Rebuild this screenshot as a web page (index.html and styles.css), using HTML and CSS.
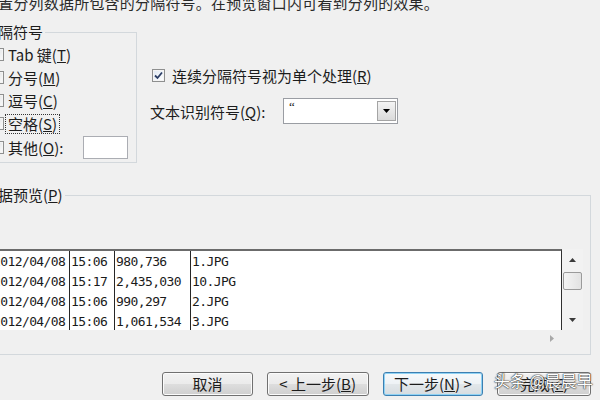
FILE: index.html
```html
<!DOCTYPE html>
<html lang="zh-CN">
<head>
<meta charset="utf-8">
<title>文本分列向导</title>
<link rel="stylesheet" href="styles.css">
</head>
<body>
<div class="dialog">
  <p class="intro">设置分列数据所包含的分隔符号。在预览窗口内可看到分列的效果。</p>
  <div class="top-row">
    <fieldset class="group delims">
      <legend>分隔符号</legend>
      <div class="opt"><span class="cb"></span><span>Tab 键(<u>T</u>)</span></div>
      <div class="opt"><span class="cb"></span><span>分号(<u>M</u>)</span></div>
      <div class="opt"><span class="cb"></span><span>逗号(<u>C</u>)</span></div>
      <div class="opt"><span class="cb"></span><span class="focus">空格(<u>S</u>)</span></div>
      <div class="opt other"><span class="cb"></span><span class="other-label">其他(<u>O</u>):</span><span class="field"></span></div>
    </fieldset>
    <div class="options">
      <div class="opt consec">
        <span class="cb checked"><svg width="11" height="11" viewBox="0 0 11 11"><path d="M2 5.5 L4.5 8 L9 2.5" fill="none" stroke="#2c3e66" stroke-width="1.8"/></svg></span>
        <span>连续分隔符号视为单个处理(<u>R</u>)</span>
      </div>
      <div class="qualifier">
        <span class="q-label">文本识别符号(<u>Q</u>):</span>
        <div class="combo">
          <span class="combo-value">“</span>
          <span class="combo-btn"><svg width="7" height="4" viewBox="0 0 7 4"><path d="M0 0 H7 L3.5 4 Z" fill="#000"/></svg></span>
        </div>
      </div>
    </div>
  </div>
  <fieldset class="group preview-group">
    <legend>数据预览(<u>P</u>)</legend>
    <div class="preview">
      <div class="grid">
        <div class="col c1">
          <div class="cell">2012/04/08</div>
          <div class="cell">2012/04/08</div>
          <div class="cell">2012/04/08</div>
          <div class="cell">2012/04/08</div>
        </div>
        <div class="col c2">
          <div class="cell">15:06</div>
          <div class="cell">15:17</div>
          <div class="cell">15:06</div>
          <div class="cell">15:06</div>
        </div>
        <div class="col c3">
          <div class="cell">980,736</div>
          <div class="cell">2,435,030</div>
          <div class="cell">990,297</div>
          <div class="cell">1,061,534</div>
        </div>
        <div class="col c4">
          <div class="cell">1.JPG</div>
          <div class="cell">10.JPG</div>
          <div class="cell">2.JPG</div>
          <div class="cell">3.JPG</div>
        </div>
      </div>
      <div class="vscroll">
        <span class="sb-btn"><svg width="7" height="4" viewBox="0 0 7 4"><path d="M0 4 H7 L3.5 0 Z" fill="#3a3a3a"/></svg></span>
        <span class="thumb"></span>
        <span class="sb-fill"></span>
        <span class="sb-btn"><svg width="7" height="4" viewBox="0 0 7 4"><path d="M0 0 H7 L3.5 4 Z" fill="#3a3a3a"/></svg></span>
      </div>
      <div class="hscroll">
        <svg width="4" height="7" viewBox="0 0 4 7"><path d="M0 0 V7 L4 3.5 Z" fill="#a8a8a8"/></svg>
      </div>
      <div class="corner"></div>
    </div>
  </fieldset>
  <div class="buttons">
    <button class="btn b-cancel">取消</button>
    <button class="btn b-back">&lt; 上一步(<u>B</u>)</button>
    <button class="btn b-next focused">下一步(<u>N</u>) &gt;</button>
    <button class="btn b-finish">完成(<u>F</u>)</button>
    <span class="watermark">头条 @晨晨早</span>
  </div>
</div>
</body>
</html>
```
FILE: styles.css
```css
html, body {
  margin: 0;
  padding: 0;
}
body {
  width: 600px;
  height: 400px;
  overflow: hidden;
  background: #f0f0f0;
  color: #1c1c1c;
  font-family: "Noto Sans CJK SC", "Noto Sans", sans-serif;
  font-size: 15px;
}
u {
  text-decoration: underline;
  text-underline-offset: 1px;
}
.dialog {
  margin: -5px 0 0 -25px;
  width: 616px;
}
.intro {
  margin: 0;
  padding-left: 8px;
  line-height: 16px;
  white-space: nowrap;
  color: #2a2a2a;
  letter-spacing: 0.2px;
}
.top-row {
  display: flex;
  align-items: flex-start;
  margin-top: 10px;
}
.group {
  margin: 0;
  border: 1px solid #d3d8dc;
  box-sizing: border-box;
  min-width: 0;
}
.group legend {
  padding: 0 2px 0 0;
  line-height: 22px;
}
.delims {
  width: 162px;
  padding: 0 0 3px 7px;
}
.opt {
  display: flex;
  align-items: center;
  height: 23px;
  margin-left: 8px;
  white-space: nowrap;
}
.cb {
  width: 13px;
  height: 13px;
  box-sizing: border-box;
  border: 1px solid #8e8f8f;
  background: linear-gradient(135deg, #dcdee0, #fbfbfb);
  box-shadow: inset 0 0 0 1px #f4f4f4;
  margin-right: 4px;
  flex: none;
  display: flex;
  align-items: center;
  justify-content: center;
}
.cb.checked {
  background: linear-gradient(135deg, #dfe8f3, #ffffff);
}
.focus {
  border: 1px dotted #333;
  padding: 0 2px;
  margin-left: -3px;
  line-height: 18px;
}
.other {
  height: 24px;
}
.other-label {
  width: 75px;
}
.field {
  width: 45px;
  height: 23px;
  box-sizing: border-box;
  border: 1px solid #abadb3;
  background: #fff;
}
.options {
  margin-left: 13px;
  padding-top: 43px;
}
.options .opt {
  margin-left: 2px;
  height: 22px;
}
.consec .cb {
  margin-right: 7px;
}
.qualifier {
  display: flex;
  align-items: center;
  margin-top: 12px;
  height: 26px;
}
.q-label {
  width: 133px;
  white-space: nowrap;
}
.combo {
  width: 115px;
  height: 26px;
  box-sizing: border-box;
  border: 1px solid #9a9da3;
  background: #fff;
  display: flex;
  align-items: stretch;
  padding: 2px 1px 2px 5px;
}
.combo-value {
  flex: 1;
  font-family: "Liberation Serif", serif;
  font-size: 13px;
  line-height: 12px;
}
.combo-btn {
  width: 19px;
  box-sizing: border-box;
  border: 1px solid #a4a4a4;
  background: linear-gradient(#f4f4f4, #dadada);
  display: flex;
  align-items: center;
  justify-content: center;
}
.preview-group {
  width: 616px;
  margin-top: 22px;
  padding: 44px 7px 7px 7px;
}
.preview-group legend {
  line-height: 20px;
}
.preview {
  margin-left: 6px;
  display: grid;
  grid-template-columns: 1fr 21px;
  grid-template-rows: 81px 17px;
}
.grid {
  display: flex;
  background: #fff;
  border-top: 2px solid #6b6b6b;
  border-left: 1px solid #6b6b6b;
  border-right: 1px solid #303030;
  overflow: hidden;
  font-family: "DejaVu Sans Mono", monospace;
  font-size: 13px;
  letter-spacing: -0.6px;
  color: #1a1a1a;
}
.col {
  box-sizing: border-box;
  padding-top: 1px;
  border-right: 1px solid #262626;
  white-space: nowrap;
}
.c1 { width: 80px; padding-left: 3px; }
.c2 { width: 45px; padding-left: 1px; }
.c3 { width: 76px; padding-left: 1px; }
.c4 { flex: 1; padding-left: 1px; border-right: 0; }
.cell {
  height: 20px;
  line-height: 20px;
}
.vscroll {
  display: flex;
  flex-direction: column;
  align-items: center;
  background: #f2f2f2;
}
.sb-btn {
  height: 21px;
  width: 21px;
  display: flex;
  align-items: center;
  justify-content: center;
  flex: none;
}
.thumb {
  width: 19px;
  height: 18px;
  margin-top: 2px;
  box-sizing: border-box;
  border: 1px solid #9a9a9a;
  border-radius: 2px;
  background: linear-gradient(90deg, #f4f4f4, #e2e2e2);
  flex: none;
}
.sb-fill {
  flex: 1;
}
.hscroll {
  display: flex;
  align-items: center;
  justify-content: flex-end;
  padding-right: 8px;
  background: #f0f0f0;
}
.corner {
  background: #f0f0f0;
}
.buttons {
  position: relative;
  display: flex;
  gap: 14px;
  margin-top: 17px;
  padding-left: 187px;
}
.btn {
  height: 24px;
  box-sizing: border-box;
  border: 1px solid #707070;
  border-radius: 3px;
  background: linear-gradient(#f2f2f2 0%, #ebebeb 48%, #dddddd 52%, #cfcfcf 100%);
  box-shadow: inset 0 0 0 1px #fbfbfb;
  font-family: "Noto Sans CJK SC", sans-serif;
  font-size: 15px;
  line-height: 20px;
  color: #1c1c1c;
  padding: 0;
  white-space: nowrap;
}
.b-cancel { width: 91px; }
.b-back { width: 102px; }
.b-next { width: 101px; }
.b-finish { width: 94px; }
.btn.focused {
  border-color: #3c7fb1;
  background: linear-gradient(#f6f9fb 0%, #eef2f5 48%, #e2e7ea 52%, #d6dce0 100%);
  box-shadow: inset 0 0 0 1px #8fd2f4;
}
.watermark {
  position: absolute;
  left: 519px;
  top: -3px;
  font-size: 16px;
  line-height: 22px;
  color: #fff;
  white-space: nowrap;
  text-shadow: 0 0 1px #333, 0 0 1px #333, 0 0 2px #555;
}
```
